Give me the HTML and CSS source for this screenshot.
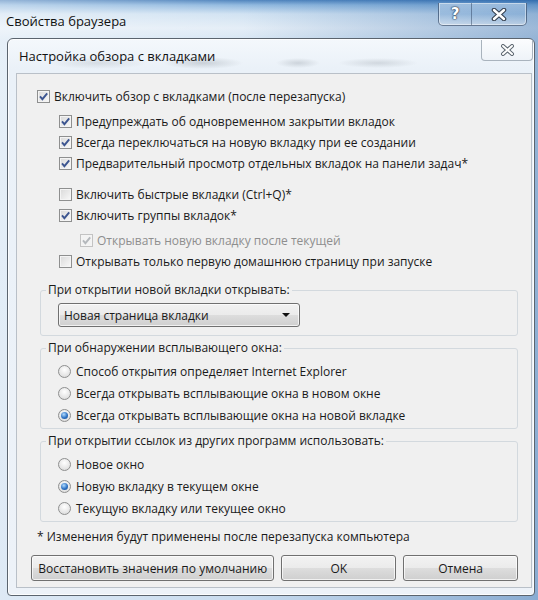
FILE: index.html
```html
<!DOCTYPE html>
<html lang="ru">
<head>
    <meta charset="UTF-8">
    <meta name="viewport" content="width=device-width, initial-scale=1.0">
    <title>Настройка обзора с вкладками</title>
    <link rel="stylesheet" href="styles.css">
</head>
<body>

    <div class="window">
        <div class="titlebar">
            <span class="title">Свойства браузера</span>
            <div class="caption-btns">
                <span class="cap-btn help">?</span>
                <span class="cap-btn close">
                    <svg width="16" height="13" viewBox="0 0 16 13">
                        <path class="x-out" d="M3 2l10 9M13 2L3 11"/>
                        <path class="x-in" d="M3 2l10 9M13 2L3 11"/>
                    </svg>
                </span>
            </div>
        </div>

        <div class="dialog">
            <div class="dialog-titlebar">
                <span class="dialog-title">Настройка обзора с вкладками</span>
                <span class="dialog-close">
                    <svg width="15" height="12" viewBox="0 0 15 12">
                        <path class="x-out" d="M3 2l9 8M12 2L3 10"/>
                        <path class="x-in" d="M3 2l9 8M12 2L3 10"/>
                    </svg>
                </span>
            </div>

            <div class="panel">
                <div class="checks">
                    <label class="check">
                        <span class="box"><svg viewBox="0 0 11 11"><path d="M2 5.4l2.4 2.8L9.2 2.4"/></svg></span>
                        Включить обзор с вкладками (после перезапуска)
                    </label>

                    <div class="sub first">
                        <label class="check">
                            <span class="box"><svg viewBox="0 0 11 11"><path d="M2 5.4l2.4 2.8L9.2 2.4"/></svg></span>
                            Предупреждать об одновременном закрытии вкладок
                        </label>
                        <label class="check">
                            <span class="box"><svg viewBox="0 0 11 11"><path d="M2 5.4l2.4 2.8L9.2 2.4"/></svg></span>
                            Всегда переключаться на новую вкладку при ее создании
                        </label>
                        <label class="check">
                            <span class="box"><svg viewBox="0 0 11 11"><path d="M2 5.4l2.4 2.8L9.2 2.4"/></svg></span>
                            Предварительный просмотр отдельных вкладок на панели задач*
                        </label>
                    </div>

                    <div class="sub second">
                        <label class="check">
                            <span class="box"></span>
                            Включить быстрые вкладки (Ctrl+Q)*
                        </label>
                        <label class="check">
                            <span class="box"><svg viewBox="0 0 11 11"><path d="M2 5.4l2.4 2.8L9.2 2.4"/></svg></span>
                            Включить группы вкладок*
                        </label>
                        <label class="check disabled">
                            <span class="box"><svg viewBox="0 0 11 11"><path d="M2 5.4l2.4 2.8L9.2 2.4"/></svg></span>
                            Открывать новую вкладку после текущей
                        </label>
                        <label class="check">
                            <span class="box"></span>
                            Открывать только первую домашнюю страницу при запуске
                        </label>
                    </div>
                </div>

                <fieldset class="group group-select">
                    <legend>При открытии новой вкладки открывать:</legend>
                    <div class="select">
                        <span>Новая страница вкладки</span>
                        <span class="arrow"></span>
                    </div>
                </fieldset>

                <fieldset class="group">
                    <legend>При обнаружении всплывающего окна:</legend>
                    <label class="radio"><span class="dot"></span>Способ открытия определяет Internet Explorer</label>
                    <label class="radio"><span class="dot"></span>Всегда открывать всплывающие окна в новом окне</label>
                    <label class="radio"><span class="dot on"></span>Всегда открывать всплывающие окна на новой вкладке</label>
                </fieldset>

                <fieldset class="group">
                    <legend>При открытии ссылок из других программ использовать:</legend>
                    <label class="radio"><span class="dot"></span>Новое окно</label>
                    <label class="radio"><span class="dot on"></span>Новую вкладку в текущем окне</label>
                    <label class="radio"><span class="dot"></span>Текущую вкладку или текущее окно</label>
                </fieldset>

                <p class="note">* Изменения будут применены после перезапуска компьютера</p>

                <div class="buttons">
                    <button class="btn wide">Восстановить значения по умолчанию</button>
                    <button class="btn">OK</button>
                    <button class="btn">Отмена</button>
                </div>
            </div>
        </div>
    </div>

</body>
</html>
```

FILE: styles.css
```css
* {
    box-sizing: border-box;
}

body {
    margin: 0;
    background: #5d92c6;
    font-family: 'Open Sans', 'Noto Sans', sans-serif;
    font-size: 12px;
    color: #1a1a1a;
}

/* outer glass window */
.window {
    width: 538px;
    height: 600px;
    overflow: hidden;
    background:
        linear-gradient(90deg, rgba(255, 255, 255, 0.45) 0, rgba(255, 255, 255, 0.1) 45%, rgba(30, 90, 160, 0.35) 100%),
        linear-gradient(180deg, #3d77b6 0, #86b2dc 5px, #cde0f1 14px, #e2ecf6 28px, #d2e3f2 40px, #c3d8ed 100%);
}

.titlebar {
    display: flex;
    justify-content: space-between;
    align-items: flex-start;
    height: 38px;
    padding: 3px 11px 0 6px;
}

.title {
    margin-top: 10px;
    font-size: 13px;
    line-height: 16px;
    color: #111;
}

.caption-btns {
    display: flex;
    height: 23px;
    border: 1px solid rgba(35, 55, 85, 0.6);
    border-top: none;
    border-radius: 0 0 5px 5px;
    overflow: hidden;
    background: linear-gradient(180deg, rgba(255, 255, 255, 0.4), rgba(120, 170, 220, 0.25) 50%, rgba(255, 255, 255, 0.3));
    box-shadow: inset 0 0 0 1px rgba(255, 255, 255, 0.45);
}

.cap-btn {
    display: flex;
    align-items: center;
    justify-content: center;
}

.help {
    width: 33px;
    border-right: 1px solid rgba(35, 55, 85, 0.45);
    font-family: 'DejaVu Sans', sans-serif;
    font-weight: bold;
    font-size: 15px;
    color: #fff;
    text-shadow: 0 0 1px #2b3a4f, 0 0 1px #2b3a4f, 0 0 2px #2b3a4f;
}

.close {
    width: 54px;
}

.x-out {
    fill: none;
    stroke: #35404f;
    stroke-width: 4.6;
    stroke-linecap: round;
}

.x-in {
    fill: none;
    stroke: #fff;
    stroke-width: 2.4;
    stroke-linecap: round;
}

/* inner dialog */
.dialog {
    margin-left: 7px;
    width: 528px;
    height: 558px;
    padding: 0 2px 0 8px;
    border: 1px solid #5b646e;
    border-radius: 6px 6px 4px 4px;
    background:
        radial-gradient(ellipse 40px 6px at 195px 24px, rgba(110, 120, 130, 0.28), rgba(110, 120, 130, 0)),
        radial-gradient(ellipse 22px 5px at 290px 24px, rgba(110, 120, 130, 0.25), rgba(110, 120, 130, 0)),
        radial-gradient(ellipse 40px 5px at 370px 24px, rgba(110, 120, 130, 0.22), rgba(110, 120, 130, 0)),
        radial-gradient(ellipse 50px 6px at 90px 24px, rgba(110, 120, 130, 0.18), rgba(110, 120, 130, 0)),
        linear-gradient(180deg, #f4f8fc 0, #eaf1f8 30px, #edf2f8 100%);
    box-shadow: inset 0 0 0 1px rgba(255, 255, 255, 0.8);
}

.dialog-titlebar {
    display: flex;
    justify-content: space-between;
    align-items: flex-start;
    height: 34px;
}

.dialog-title {
    margin: 9px 0 0 3px;
    font-size: 13px;
    line-height: 16px;
    color: #111;
}

.dialog-close {
    display: flex;
    align-items: center;
    justify-content: center;
    width: 52px;
    height: 21px;
    margin: 1px -1px 0 0;
    border: 1px solid #a9b3bd;
    border-top: none;
    border-radius: 0 0 4px 4px;
    background: linear-gradient(180deg, #fbfcfe, #eef3f8);
}

.dialog-close .x-out {
    stroke: #5c6670;
    stroke-width: 4;
}

.dialog-close .x-in {
    stroke-width: 2;
}

.panel {
    height: 515px;
    padding: 12px 13px 0 14px;
    border: 1px solid #b9c0c8;
    background: #f0f0f0;
}

/* checkboxes */
.checks {
    padding-left: 6px;
}

.check,
.radio {
    display: flex;
    align-items: center;
    gap: 4px;
    height: 21px;
    white-space: nowrap;
}

.checks > .check {
    height: 20px;
}

.sub {
    margin-left: 22px;
}

.sub.first {
    margin-top: 5px;
}

.sub.second {
    margin-top: 10px;
}

.box {
    flex: none;
    display: flex;
    width: 13px;
    height: 13px;
    border: 1px solid #8e8f8f;
    background: linear-gradient(135deg, #d9d9d9, #f9f9f9);
    box-shadow: inset 0 0 0 1px #f4f4f4;
}

.box svg {
    width: 11px;
    height: 11px;
}

.box path {
    fill: none;
    stroke: #3c5590;
    stroke-width: 1.9;
}

.check.disabled {
    margin: 4px 0 0 21px;
    color: #8e8e8e;
}

.check.disabled .box {
    border-color: #c3c3c3;
    background: #f3f3f3;
}

.check.disabled path {
    stroke: #b4b8bc;
}

/* group boxes */
.group {
    margin: 4px 0 0 9px;
    padding: 4px 5px 2px 5px;
    border: 1px solid #d3d9de;
    border-radius: 3px;
}

.group-select {
    margin-top: 10px;
    padding: 5px 5px 8px 5px;
}

.group legend {
    padding: 0 2px;
    line-height: 16px;
}

.radio {
    height: 22px;
    margin-left: 12px;
    gap: 5px;
}

.dot {
    flex: none;
    display: flex;
    align-items: center;
    justify-content: center;
    width: 13px;
    height: 13px;
    border: 1px solid #8e8f8f;
    border-radius: 50%;
    background: radial-gradient(circle at 50% 35%, #ffffff, #d6d6d6);
}

.dot.on::after {
    content: "";
    width: 7px;
    height: 7px;
    border-radius: 50%;
    background: radial-gradient(circle at 40% 35%, #b2dcff, #2f73c4 55%, #174a8b);
}

/* combobox */
.select {
    display: flex;
    align-items: center;
    justify-content: space-between;
    width: 242px;
    height: 24px;
    margin-left: 12px;
    padding: 0 9px 0 5px;
    border: 1px solid #707070;
    border-radius: 3px;
    background: linear-gradient(180deg, #f2f2f2 0, #ebebeb 50%, #dddddd 51%, #cfcfcf 100%);
    box-shadow: inset 0 0 0 1px rgba(255, 255, 255, 0.7);
}

.arrow {
    width: 0;
    height: 0;
    border-left: 4px solid transparent;
    border-right: 4px solid transparent;
    border-top: 4px solid #111;
}

.note {
    margin: 7px 0 0 6px;
    line-height: 16px;
}

/* buttons */
.buttons {
    display: flex;
    gap: 7px;
    margin-top: 10px;
}

.btn {
    width: 115px;
    height: 26px;
    padding: 0;
    border: 1px solid #707070;
    border-radius: 3px;
    background: linear-gradient(180deg, #f2f2f2 0, #ebebeb 50%, #dddddd 51%, #cfcfcf 100%);
    box-shadow: inset 0 0 0 1px rgba(255, 255, 255, 0.7);
    font-family: inherit;
    font-size: 12px;
    color: #1a1a1a;
}

.btn.wide {
    width: 244px;
}
```
